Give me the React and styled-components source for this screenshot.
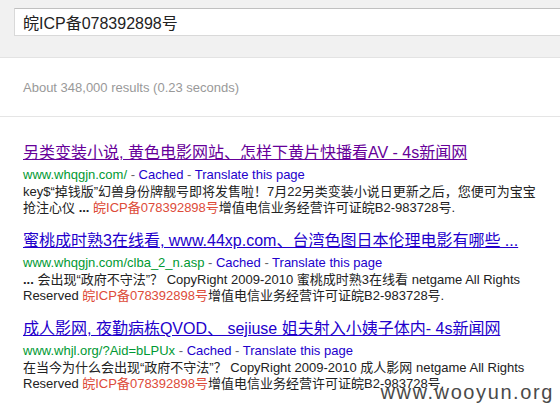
import React from "react";
import styled, { createGlobalStyle } from "styled-components";

const GlobalStyle = createGlobalStyle`
  html, body {
    margin: 0;
    padding: 0;
    background: #fff;
  }
  body {
    font-family: "Liberation Sans", Arial, "Noto Sans CJK SC", sans-serif;
    overflow: hidden;
  }
`;

const Page = styled.div`
  position: relative;
  width: 560px;
  height: 405px;
  overflow: hidden;
`;

const Header = styled.div`
  height: 58px;
  background: #f1f1f1;
  border-bottom: 1px solid #e3e3e3;
  padding: 8px 0 0 14px;
  box-sizing: border-box;
`;

const SearchBox = styled.div`
  width: 600px;
  height: 28px;
  box-sizing: border-box;
  background: #fff;
  border: 1px solid #d9d9d9;
  border-top-color: #c0c0c0;
  padding-left: 8px;
  display: flex;
  align-items: center;
  font-size: 16px;
  color: #222;
`;

const Stats = styled.div`
  padding: 22px 0 20px 23px;
  font-size: 13px;
  line-height: 16px;
  color: #999;
  border-bottom: 1px solid #e5e5e5;
`;

const Results = styled.div`
  padding: 26px 0 0 23px;
`;

const Result = styled.div`
  margin-bottom: 15px;
`;

const Title = styled.a`
  display: inline-block;
  font-size: 16px;
  line-height: 20px;
  color: ${(p) => (p.$visited ? "#660099" : "#2200cc")};
  text-decoration: underline;
  white-space: nowrap;
  cursor: pointer;
`;

const UrlLine = styled.div`
  margin-top: 3px;
  font-size: 13px;
  line-height: 17px;
  color: #666;
  white-space: nowrap;
`;

const Url = styled.span`
  color: #009933;
`;

const Action = styled.span`
  color: #2200cc;
`;

const Snippet = styled.div`
  margin-top: 1px;
  font-size: 13px;
  line-height: 16px;
  color: #222;
  white-space: nowrap;
`;

const Hl = styled.span`
  color: #dd4b39;
`;

const Watermark = styled.div`
  position: absolute;
  right: 6px;
  bottom: 8px;
  font-size: 20px;
  line-height: 10px;
  color: #4a4a4a;
  letter-spacing: 1.6px;
`;

const ICP = () => (
  <>
    <Hl>皖ICP备078392898号</Hl>增值电信业务经营许可证皖B2-983728号.
  </>
);

const UrlRow = ({ url }) => (
  <UrlLine>
    <Url>{url}</Url> - <Action>Cached</Action> - <Action>Translate this page</Action>
  </UrlLine>
);

export default function App() {
  return (
    <Page>
      <GlobalStyle />
      <Header>
        <SearchBox>皖ICP备078392898号</SearchBox>
      </Header>
      <Stats>About 348,000 results (0.23 seconds)</Stats>
      <Results>
        <Result>
          <Title $visited>另类变装小说, 黄色电影网站、怎样下黄片快播看AV - 4s新闻网</Title>
          <UrlRow url="www.whqgjn.com/" />
          <Snippet>
            key$“掉钱版”幻兽身份牌靓号即将发售啦！7月22另类变装小说日更新之后，您便可为宝宝
            <br />
            抢注心仪 <b>...</b> <ICP />
          </Snippet>
        </Result>
        <Result>
          <Title>蜜桃成时熟3在线看, www.44xp.com、台湾色图日本伦理电影有哪些 ...</Title>
          <UrlRow url="www.whqgjn.com/clba_2_n.asp" />
          <Snippet>
            <b>...</b> 会出现“政府不守法”？ CopyRight 2009-2010 蜜桃成时熟3在线看 netgame All Rights
            <br />
            Reserved <ICP />
          </Snippet>
        </Result>
        <Result>
          <Title>成人影网, 夜勤病栋QVOD、 sejiuse 姐夫射入小姨子体内- 4s新闻网</Title>
          <UrlRow url="www.whjl.org/?Aid=bLPUx" />
          <Snippet>
            在当今为什么会出现“政府不守法”？ CopyRight 2009-2010 成人影网 netgame All Rights
            <br />
            Reserved <ICP />
          </Snippet>
        </Result>
      </Results>
      <Watermark>www.wooyun.org</Watermark>
    </Page>
  );
}
